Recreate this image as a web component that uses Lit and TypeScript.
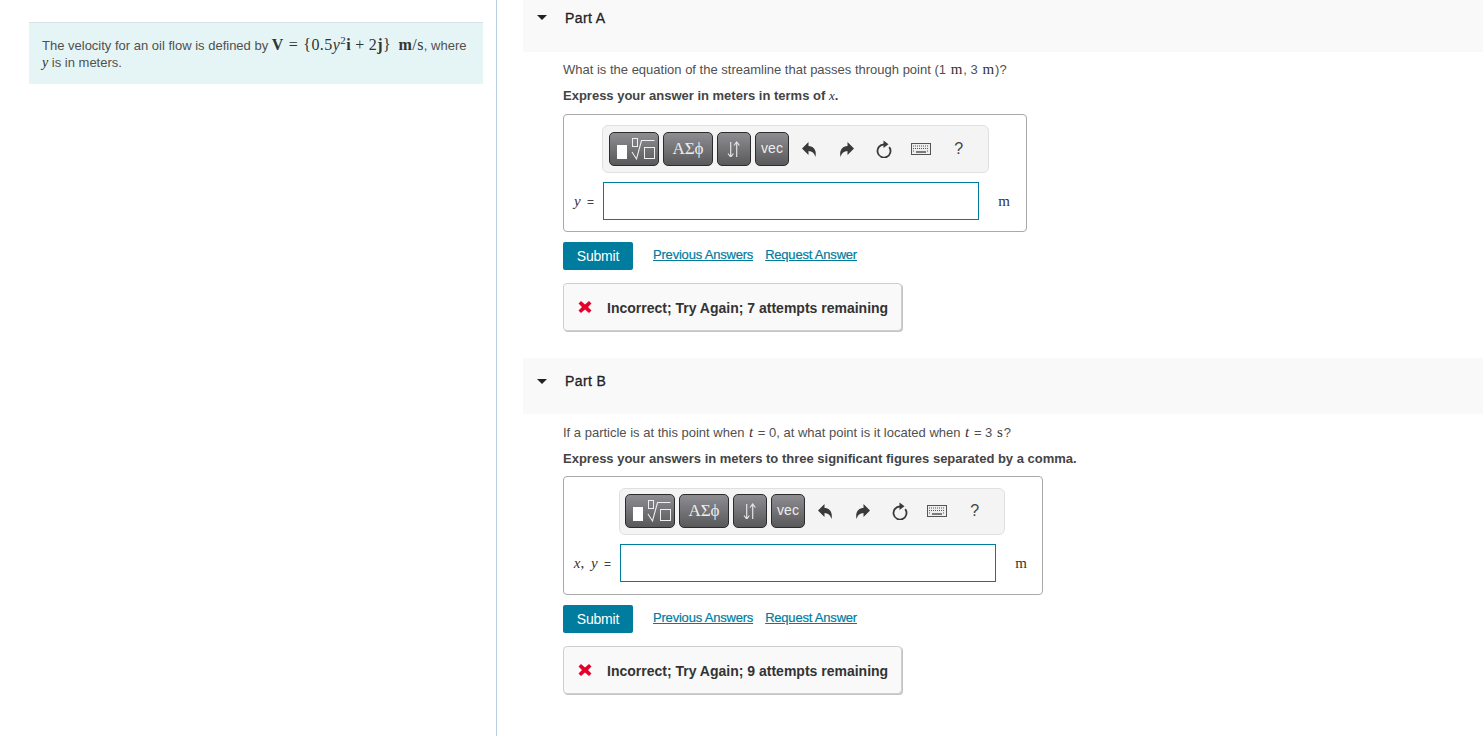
import { LitElement, html, css, svg } from "lit";
import { customElement } from "lit/decorators.js";

const radical = html`<svg width="48" height="32" viewBox="0 0 48 32" fill="none">
  <rect x="7" y="12" width="10" height="14" fill="#fff"/>
  <rect x="22.500" y="5.500" width="5" height="8" stroke="#eee"/>
  <path d="M22 19l4.500 7L31.500 7.500H44.500" stroke="#eee" stroke-width="1.100"/>
  <rect x="34.500" y="14.500" width="10" height="11" stroke="#eee"/>
</svg>`;

const arrows = html`<svg width="16" height="16" viewBox="0 0 16 16" fill="none" stroke="#e4e4e4" stroke-width="1.200">
  <path d="M4.700 1v15M2 12.500l2.700 3.500 2.700-3.500"/>
  <path d="M10.700 16V1M8 4.500L10.700 1l2.700 3.500"/>
</svg>`;

const undoPath = svg`<path d="M0 6.500 6.500 0v4C11 4 15 7.500 13.500 15 12.500 11 10 9 6.500 9v4z" fill="#3a3a3a"/>`;

const iconUndo = html`<svg class="ic" width="15" height="15" viewBox="0 0 15 15">${undoPath}</svg>`;
const iconRedo = html`<svg class="ic" width="15" height="15" viewBox="0 0 15 15"><g transform="translate(15 0) scale(-1 1)">${undoPath}</g></svg>`;
const iconReset = html`<svg class="ic" width="18" height="18" viewBox="0 0 18 18" fill="none">
  <path d="M9 4.500a6.500 6.500 0 1 0 5.200 2.600" stroke="#3a3a3a" stroke-width="1.800"/>
  <path d="M8.500 .5l5 3.800-5 3.700z" fill="#3a3a3a"/>
</svg>`;
const iconKeyboard = html`<svg class="ic" width="20" height="12" viewBox="0 0 20 12" fill="none">
  <rect x=".5" y=".5" width="19" height="11" fill="#eee" stroke="#555"/>
  <path d="M2 3h16M2 5.500h16" stroke="#555" stroke-dasharray="1 1"/>
  <path d="M2 8h2M16 8h2" stroke="#555" stroke-dasharray="1 1"/>
  <path d="M5 9h10" stroke="#555" stroke-width="1.500"/>
</svg>`;
const iconX = html`<svg width="14" height="14" viewBox="0 0 14 14"><path d="M3 1l4 3.500L11 1l2.500 2.500L10 7l3.500 3.500L11 13 7 9.500 3 13 .5 10.500 4 7 .5 3.500z" fill="#e4002b"/></svg>`;
const caret = html`<svg width="10" height="5" viewBox="0 0 10 5"><path d="M0 0h10L5 5z" fill="#222"/></svg>`;

@customElement("app-root")
export class AppRoot extends LitElement {
  static styles = css`
    :host {
      display: flex;
      height: 736px;
      overflow: hidden;
      font-family: "Liberation Sans", Arial, sans-serif;
      font-size: 13px;
      color: #505050;
      background: #fff;
    }
    .left {
      box-sizing: border-box;
      width: 497px;
      flex: none;
      border-right: 1px solid #b8cfe4;
      padding: 22px 13px 0 29px;
    }
    .intro {
      box-sizing: border-box;
      height: 62px;
      background: #e5f5f6;
      border-top: 1px solid #d8e2e6;
      padding: 13px 13px 0;
      line-height: 17px;
      white-space: nowrap;
    }
    .m { font-family: "Liberation Serif", "DejaVu Serif", serif; color: #333; font-size: 14px; }
    .eq { font-size: 16px; letter-spacing: 0.45px; }
    .m i { font-style: italic; }
    .m sup { font-size: 11px; line-height: 0; }
    .op { margin: 0 4px; }
    .rel { margin: 0 5px; }
    .gap { margin-left: 3px; }
    .right { flex: 1; padding-left: 26px; min-width: 0; }
    .head {
      background: #f9f9f9;
      display: flex;
      align-items: flex-start;
      font-size: 14px;
      line-height: 16px;
      letter-spacing: 0.4px;
      color: #222;
      -webkit-text-stroke: 0.3px #222;
      box-sizing: border-box;
    }
    .caret { width: 42px; padding-left: 14px; box-sizing: border-box; display: flex; }
    .a .head { height: 52px; padding-top: 10px; }
    .b { margin-top: 27px; }
    .b .head { height: 56px; padding-top: 15px; }
    .a .caret { padding-top: 5px; }
    .b .caret { padding-top: 6px; }
    .body { padding-left: 40px; }
    .q { line-height: 16px; margin-top: 10px; white-space: nowrap; }
    .q .m { font-size: 15px; line-height: 1; padding: 0 1px; }
    .b .q { margin-top: 11px; }
    .hint { font-weight: 700; line-height: 16px; margin-top: 10px; color: #444; white-space: nowrap; }
    .hint .m { font-weight: 400; font-size: 13px; }
    .box {
      box-sizing: border-box;
      height: 118px;
      margin-top: 10px;
      border: 1px solid #a9a9a9;
      border-radius: 4px;
      padding: 10px 0 0;
    }
    .a .box { width: 464px; }
    .b .box { width: 480px; height: 119px; margin-top: 9px; }
    .tb {
      box-sizing: border-box;
      width: 387px;
      height: 48px;
      background: #f4f4f4;
      border: 1px solid #e0e0e0;
      border-radius: 6px;
      padding: 6px;
      display: flex;
      align-items: flex-start;
      gap: 4px;
    }
    .a .tb { margin-left: 38px; }
    .b .tb { margin-left: 55px; margin-top: 1px; height: 47px; width: 386px; padding: 5px; }
    .btn {
      box-sizing: border-box;
      height: 34px;
      border: 1px solid #2c2c2c;
      border-radius: 5px;
      background: linear-gradient(#8e8d92, #59595b);
      color: #eee;
      display: flex;
      align-items: center;
      justify-content: center;
      flex: none;
    }
    .w50 { width: 50px; }
    .w34 { width: 34px; }
    .greek { font-family: "Liberation Serif", serif; font-size: 17px; }
    .vec { font-size: 14px; padding-bottom: 3px; }
    .tools { display: flex; align-items: center; height: 34px; margin-left: -2px; }
    .slot { width: 37.250px; display: flex; align-items: center; justify-content: center; flex: none; }
    .qm { font-size: 16px; color: #444; }
    .row { display: flex; align-items: center; margin-top: 9px; }
    .lbl { box-sizing: border-box; flex: none; text-align: right; padding-right: 9px; font-size: 12px; word-spacing: 3px; color: #444; white-space: nowrap; }
    .a .lbl { width: 39px; }
    .b .lbl { width: 56px; }
    .lbl .m { font-size: 15px; }
    .input { box-sizing: border-box; width: 376px; height: 38px; border: 1px solid #007c9e; background: #fff; flex: none; }
    .unit { box-sizing: border-box; flex: none; font-family: "Liberation Serif", serif; font-size: 15px; color: #333; width: 47px; padding-left: 3px; text-align: center; }
    .actions { display: flex; align-items: center; margin-top: 10px; }
    .submit {
      box-sizing: border-box;
      width: 70px;
      height: 28px;
      background: #007c9e;
      color: #fff;
      border-radius: 2px;
      font-size: 14px;
      letter-spacing: -0.2px;
      display: flex;
      align-items: center;
      justify-content: center;
    }
    .links { display: flex; gap: 12px; margin-left: 20px; padding-bottom: 3px; }
    .links a { color: #007c9e; text-decoration: underline; font-size: 13px; letter-spacing: -0.2px; -webkit-text-stroke: 0.2px #007c9e; }
    .fb {
      box-sizing: border-box;
      width: 339px;
      height: 48px;
      margin-top: 13px;
      background: #f9f9f9;
      border: 1px solid #cfcfcf;
      border-radius: 4px;
      box-shadow: 1px 1px 0 #c4c4c4;
      display: flex;
      align-items: center;
      padding-left: 14px;
      gap: 15px;
      font-weight: 700;
      font-size: 14px;
      color: #333;
      white-space: nowrap;
    }
    .fb span { padding-top: 2px; }
  `;

  private toolbar() {
    return html`<div class="tb">
      <div class="btn w50">${radical}</div>
      <div class="btn w50 greek">ΑΣϕ</div>
      <div class="btn w34">${arrows}</div>
      <div class="btn w34 vec">vec</div>
      <div class="tools">
        <span class="slot">${iconUndo}</span>
        <span class="slot">${iconRedo}</span>
        <span class="slot">${iconReset}</span>
        <span class="slot">${iconKeyboard}</span>
        <span class="slot qm">?</span>
      </div>
    </div>`;
  }

  private answer(label: unknown, attempts: number) {
    return html`<div class="box">
        ${this.toolbar()}
        <div class="row">
          <div class="lbl">${label} =</div>
          <div class="input"></div>
          <div class="unit">m</div>
        </div>
      </div>
      <div class="actions">
        <div class="submit">Submit</div>
        <div class="links"><a>Previous Answers</a><a>Request Answer</a></div>
      </div>
      <div class="fb">${iconX}<span>Incorrect; Try Again; ${attempts} attempts remaining</span></div>`;
  }

  render() {
    return html`
      <aside class="left">
        <div class="intro">
          The velocity for an oil flow is defined by
          <span class="m eq"><b>V</b><span class="rel">=</span>{0.5<i>y</i><sup>2</sup><b>i</b><span class="op">+</span>2<b>j</b>}<span class="gap"></span> <b>m</b>/s</span>, where<br />
          <span class="m"><i>y</i></span> is in meters.
        </div>
      </aside>
      <main class="right">
        <section class="a">
          <div class="head"><span class="caret">${caret}</span>Part A</div>
          <div class="body">
            <div class="q">What is the equation of the streamline that passes through point (1 <span class="m">m</span>, 3 <span class="m">m</span>)?</div>
            <div class="hint">Express your answer in meters in terms of <span class="m"><i>x</i></span>.</div>
            ${this.answer(html`<span class="m"><i>y</i></span>`, 7)}
          </div>
        </section>
        <section class="b">
          <div class="head"><span class="caret">${caret}</span>Part B</div>
          <div class="body">
            <div class="q">If a particle is at this point when <span class="m"><i>t</i></span> = 0, at what point is it located when <span class="m"><i>t</i></span> = 3 <span class="m">s</span>?</div>
            <div class="hint">Express your answers in meters to three significant figures separated by a comma.</div>
            ${this.answer(html`<span class="m"><i>x</i>, <i>y</i></span>`, 9)}
          </div>
        </section>
      </main>
    `;
  }
}
